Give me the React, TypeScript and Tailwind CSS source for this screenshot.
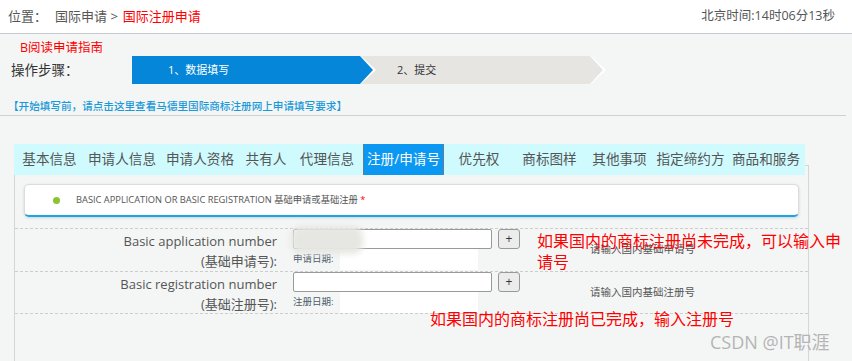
import React from 'react'

type Tab = { label: string; w: string; active?: boolean }

const tabs: Tab[] = [
  { label: '基本信息', w: 'w-[71px]' },
  { label: '申请人信息', w: 'w-[74px]' },
  { label: '申请人资格', w: 'w-[82px]' },
  { label: '共有人', w: 'w-[50px]' },
  { label: '代理信息', w: 'w-[72px]' },
  { label: '注册/申请号', w: 'w-[81px]', active: true },
  { label: '优先权', w: 'w-[70px]' },
  { label: '商标图样', w: 'w-[71px]' },
  { label: '其他事项', w: 'w-[69px]' },
  { label: '指定缔约方', w: 'w-[73px]' },
  { label: '商品和服务', w: 'w-[78px]' }
]

type RowProps = {
  en: string
  cn: string
  dateLabel: string
  hint: string
  h: string
}

// 基础申请号 / 基础注册号 の入力行
const NumberRow = ({ en, cn, dateLabel, hint, h }: RowProps) => (
  <div className={`flex ${h} border-b border-dashed border-[#cdcdcd]`}>
    <div className="w-[262px] pt-[2px] text-right text-[13px] leading-[20px] text-[#555]">
      <div>{en}</div>
      <div>{cn}</div>
    </div>
    <div className="ml-[16px] flex flex-col">
      <div className="flex items-center gap-[6px]">
        <input className="h-[20px] w-[199px] rounded-[2px] border border-[#999] bg-white outline-none" />
        <button className="flex h-[20px] w-[22px] items-center justify-center rounded-[3px] border border-[#999] bg-[#ececec] text-[12px] leading-none text-[#333]">
          +
        </button>
      </div>
      <div className="flex h-[21px] items-center">
        <span className="w-[47px] text-[9.5px] text-[#4d5c6b]">{dateLabel}</span>
        <div className="h-full w-[138px] bg-white" />
      </div>
    </div>
    <div className="ml-[70px] self-center text-[10.5px] text-[#555]">{hint}</div>
  </div>
)

export default function App() {
  return (
    <div className="relative h-[361px] w-[852px] overflow-hidden bg-[#f4f6f6] font-['Open_Sans','Noto_Sans_CJK_SC',sans-serif]">
      {/* 位置バー */}
      <div className="flex h-[34px] items-center justify-between border-b border-[#c6cad1] bg-white pl-[8px] pr-[17px] text-[13px] text-[#555]">
        <div className="flex items-center">
          <span>位置：</span>
          <span className="ml-[8px]">国际申请 &gt; </span>
          <span className="ml-[5px] text-[#ff0000]">国际注册申请</span>
        </div>
        <div className="text-[12.5px]">北京时间:14时06分13秒</div>
      </div>

      {/* 操作步骤 */}
      <div className="pl-[20px] pt-[6px] text-[12.5px] leading-[16px] text-[#ff0000]">B阅读申请指南</div>
      <div className="flex h-[28px] items-center pl-[11px]">
        <div className="w-[121px] text-[13.5px] text-[#333]">操作步骤：</div>
        <div className="relative z-10 h-full w-[244px] bg-white [clip-path:polygon(0_0,229px_0,244px_50%,229px_100%,0_100%)]">
          <div className="flex h-full w-[241px] items-center bg-[#0586d8] pl-[36px] text-[11px] text-white [clip-path:polygon(0_0,228px_0,241px_50%,228px_100%,0_100%)]">
            1、数据填写
          </div>
        </div>
        <div className="-ml-[18px] h-full w-[248px] bg-white [clip-path:polygon(0_0,233px_0,248px_50%,233px_100%,0_100%)]">
          <div className="flex h-full w-[245px] items-center bg-[#e6e5e2] pl-[39px] text-[11px] text-[#333] [clip-path:polygon(0_0,232px_0,245px_50%,232px_100%,0_100%)]">
            2、提交
          </div>
        </div>
      </div>
      <div className="mt-[15px] h-[17px] w-[846px] border-b border-[#cdd0d6] pl-[8px] text-[10.6px] font-medium leading-[15px] text-[#1b9ad8]">
        【开始填写前，请点击这里查看马德里国际商标注册网上申请填写要求】
      </div>

      {/* タブ */}
      <div className="relative z-10 ml-[14px] mt-[28px] flex h-[31px] w-[791px] bg-[#cffbfe] text-[13.6px]">
        {tabs.map((t) => (
          <div
            key={t.label}
            className={[
              'flex h-full items-center justify-center',
              t.w,
              t.active ? 'border-x border-[#6b7a86] bg-[#0a98f3] text-white' : 'text-[#555]'
            ].join(' ')}
          >
            {t.label}
          </div>
        ))}
      </div>

      {/* パネル */}
      <div className="-mt-[10px] ml-[14px] h-[200px] w-[795px] border-x border-t border-[#d6d6d6] pt-[18px]">
        <div className="mx-[9px] flex h-[33px] items-center rounded-[5px] border border-b-2 border-[#dcdcdc] border-b-[#18a6e6] bg-white shadow-[0_1px_3px_rgba(0,0,0,0.15)]">
          <span className="ml-[28px] h-[7px] w-[7px] rounded-full bg-[#8cc42d]" />
          <span className="ml-[16px] text-[9.3px] text-[#555]">
            BASIC APPLICATION OR BASIC REGISTRATION 基础申请或基础注册 <span className="text-[#ff0000]">*</span>
          </span>
        </div>
        <div className="mt-[11px] border-t border-dashed border-[#cdcdcd]">
          <NumberRow
            h="h-[43px]"
            en="Basic application number"
            cn="(基础申请号):"
            dateLabel="申请日期:"
            hint="请输入国内基础申请号"
          />
          <NumberRow
            h="h-[42px]"
            en="Basic registration number"
            cn="(基础注册号):"
            dateLabel="注册日期:"
            hint="请输入国内基础注册号"
          />
        </div>
      </div>

      {/* 打码 */}
      <div className="absolute left-[291px] top-[226px] h-[28px] w-[72px] rounded-[10px] bg-[#e6e6e2] blur-[3px]" />

      {/* 注釈 */}
      <div className="absolute left-[537px] top-[231px] w-[308px] text-[16px] leading-[21px] text-[#ff0000]">
        如果国内的商标注册尚未完成，可以输入申请号
      </div>
      <div className="absolute left-[430px] top-[309px] text-[16px] leading-[21px] text-[#ff0000]">
        如果国内的商标注册尚已完成，输入注册号
      </div>
      <div className="absolute left-[710px] top-[331px] text-[18px] leading-[22px] text-[#b4b4b4]">CSDN @IT职涯</div>
    </div>
  )
}
